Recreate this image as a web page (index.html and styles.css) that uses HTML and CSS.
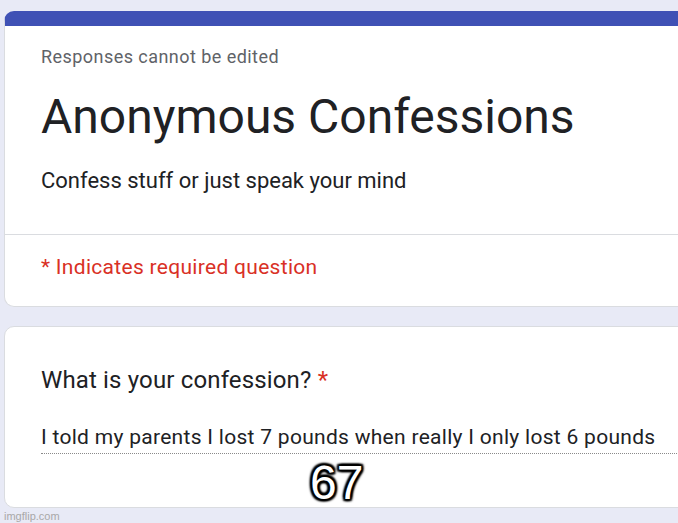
FILE: index.html
```html
<!DOCTYPE html>
<html>
<head>
<meta charset="utf-8">
<link rel="stylesheet" href="styles.css">
</head>
<body>
<div class="page">
  <div class="card header-card">
    <div class="head">
      <div class="note">Responses cannot be edited</div>
      <h1 class="title">Anonymous Confessions</h1>
      <div class="desc">Confess stuff or just speak your mind</div>
    </div>
    <div class="required">* Indicates required question</div>
  </div>
  <div class="card question-card">
    <div class="question">What is your confession? <span class="star">*</span></div>
    <div class="answer">I told my parents I lost 7 pounds when really I only lost 6 pounds</div>
    <div class="meme">67</div>
  </div>
  <div class="watermark">imgflip.com</div>
</div>
</body>
</html>
```
FILE: styles.css
```css
html, body {
  margin: 0;
  padding: 0;
  background: #e8eaf6;
  overflow: hidden;
  width: 678px;
  height: 523px;
}
.page {
  padding-top: 11px;
  padding-left: 4px;
  font-family: Roboto, "Liberation Sans", sans-serif;
  color: #202124;
  position: relative;
}
.card {
  width: 740px;
  background: #fff;
  border: 1px solid #dadce0;
  border-radius: 10px;
  box-sizing: border-box;
}
.header-card {
  border-top: 15px solid #3f51b5;
}
.head {
  padding: 19px 0 39px 36px;
  border-bottom: 1px solid #dadce0;
}
.note {
  font-size: 18px;
  line-height: 24px;
  letter-spacing: 0.45px;
  color: #5f6368;
}
.title {
  margin: 20px 0 0;
  font-size: 48px;
  line-height: 56px;
  font-weight: 400;
}
.desc {
  margin-top: 22px;
  font-size: 22px;
  line-height: 28px;
}
.required {
  padding: 18px 0 25px 36px;
  font-size: 21px;
  line-height: 28px;
  letter-spacing: 0.3px;
  color: #d93025;
}
.question-card {
  margin-top: 19px;
  height: 182px;
  padding: 38px 0 0 36px;
  position: relative;
}
.question {
  font-size: 24px;
  line-height: 30px;
  letter-spacing: 0.15px;
}
.star {
  color: #d93025;
}
.answer {
  margin-top: 29px;
  font-size: 21px;
  line-height: 26px;
  letter-spacing: 0.29px;
  padding-bottom: 3px;
  border-bottom: 1px dotted #8a8a8a;
}
.meme {
  position: absolute;
  left: 305px;
  top: 132px;
  font-family: "Liberation Sans", Arial, sans-serif;
  font-size: 48px;
  line-height: 48px;
  color: #fff;
  text-shadow: 2px 0 2px #000, -2px 0 2px #000, 0 2px 2px #000, 0 -2px 2px #000, 2px 2px 2px #000, -2px -2px 2px #000, 2px -2px 2px #000, -2px 2px 2px #000, 0 0 4px #000;
}
.watermark {
  font-family: "Liberation Sans", Arial, sans-serif;
  font-size: 11px;
  line-height: 14px;
  color: #a8a8a8;
  margin-top: 1px;
}
```
